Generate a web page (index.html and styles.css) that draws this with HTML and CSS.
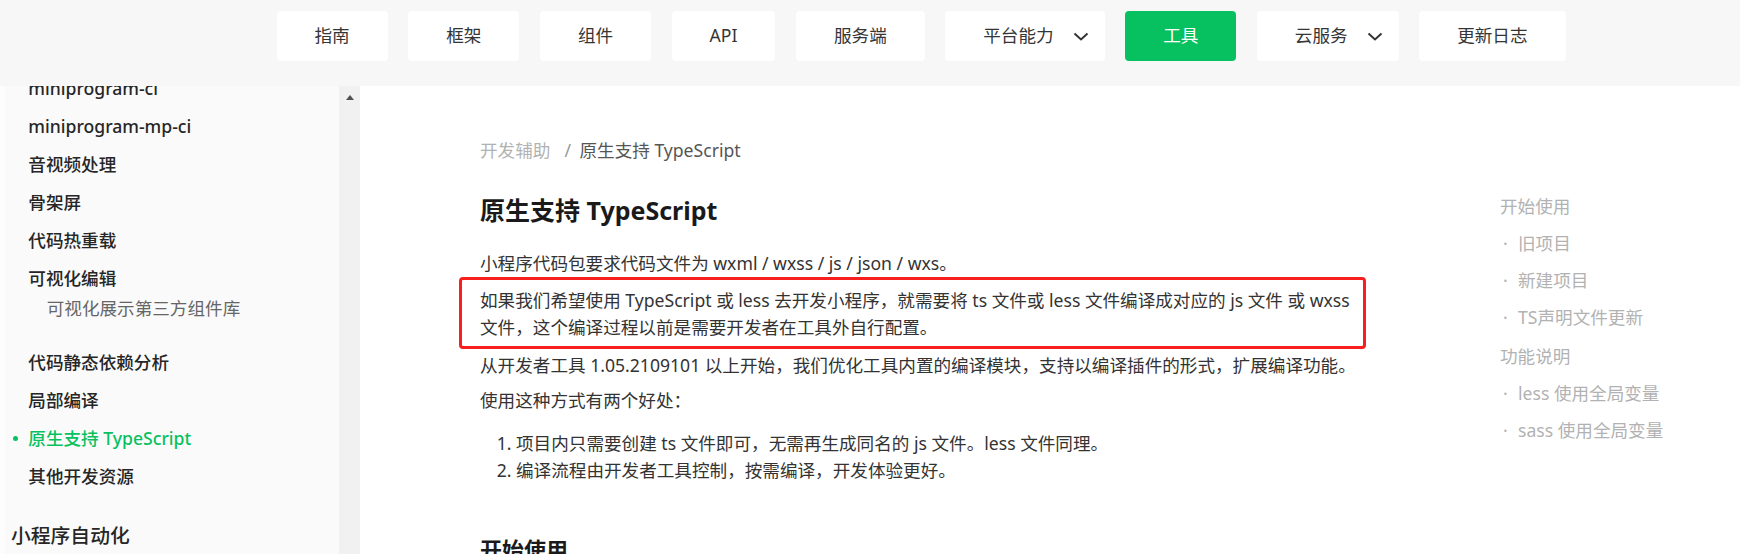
FILE: index.html
```html
<!DOCTYPE html>
<html lang="zh-CN">
<head>
<meta charset="utf-8">
<title>原生支持 TypeScript</title>
<link rel="stylesheet" href="styles.css">
</head>
<body>
<header class="topbar">
  <nav class="nav">
    <a class="nav-btn">指南</a>
    <a class="nav-btn">框架</a>
    <a class="nav-btn">组件</a>
    <a class="nav-btn">API</a>
    <a class="nav-btn">服务端</a>
    <a class="nav-btn has-menu">平台能力<svg class="chev" viewBox="0 0 24 24"><path d="M5.5 9.5 L12 15.5 L18.5 9.5"/></svg></a>
    <a class="nav-btn active">工具</a>
    <a class="nav-btn has-menu">云服务<svg class="chev" viewBox="0 0 24 24"><path d="M5.5 9.5 L12 15.5 L18.5 9.5"/></svg></a>
    <a class="nav-btn">更新日志</a>
  </nav>
</header>
<div class="page">
  <aside class="sidebar">
    <ul class="side-list">
      <li><a class="side-link">miniprogram-ci</a></li>
      <li><a class="side-link">miniprogram-mp-ci</a></li>
      <li><a class="side-link">音视频处理</a></li>
      <li><a class="side-link">骨架屏</a></li>
      <li><a class="side-link">代码热重载</a></li>
      <li>
        <a class="side-link">可视化编辑</a>
        <ul class="side-sub">
          <li><a class="sub-link">可视化展示第三方组件库</a></li>
        </ul>
      </li>
      <li><a class="side-link">代码静态依赖分析</a></li>
      <li><a class="side-link">局部编译</a></li>
      <li><a class="side-link is-active">原生支持 TypeScript</a></li>
      <li><a class="side-link">其他开发资源</a></li>
    </ul>
    <div class="side-group">小程序自动化</div>
  </aside>
  <div class="scrollbar"><span class="scroll-up"></span></div>
  <main class="main">
    <article class="doc">
      <div class="crumb"><span class="crumb-parent">开发辅助</span><span class="crumb-sep">/</span><span>原生支持 TypeScript</span></div>
      <h1 class="doc-title">原生支持 TypeScript</h1>
      <p class="para para-first">小程序代码包要求代码文件为 wxml / wxss / js / json / wxs。</p>
      <div class="highlight">
        <p class="para">如果我们希望使用 TypeScript 或 less 去开发小程序，就需要将 ts 文件或 less 文件编译成对应的 js 文件 或 wxss<br>文件，这个编译过程以前是需要开发者在工具外自行配置。</p>
      </div>
      <p class="para para-after-box">从开发者工具 1.05.2109101 以上开始，我们优化工具内置的编译模块，支持以编译插件的形式，扩展编译功能。</p>
      <p class="para para-gap">使用这种方式有两个好处：</p>
      <ol class="doc-list">
        <li>项目内只需要创建 ts 文件即可，无需再生成同名的 js 文件。less 文件同理。</li>
        <li>编译流程由开发者工具控制，按需编译，开发体验更好。</li>
      </ol>
      <h2 class="doc-h2">开始使用</h2>
    </article>
    <nav class="toc">
      <a class="toc-title">开始使用</a>
      <a class="toc-link">旧项目</a>
      <a class="toc-link">新建项目</a>
      <a class="toc-link">TS声明文件更新</a>
      <a class="toc-title toc-title-next">功能说明</a>
      <a class="toc-link">less 使用全局变量</a>
      <a class="toc-link">sass 使用全局变量</a>
    </nav>
  </main>
</div>
</body>
</html>
```

FILE: styles.css
```css
* {
  box-sizing: border-box;
}

html,
body {
  margin: 0;
  padding: 0;
}

body {
  width: 1740px;
  height: 554px;
  overflow: hidden;
  font-family: "Noto Sans", "Noto Sans CJK SC", sans-serif;
  font-size: 17.6px;
  color: #333;
  background: #fff;
}

a {
  text-decoration: none;
  color: inherit;
}

/* ---------- top bar ---------- */
.topbar {
  height: 86px;
  background: #f7f7f7;
  padding: 11px 0 0 276.5px;
}

.nav {
  display: flex;
  gap: 20.5px;
}

.nav-btn {
  display: flex;
  align-items: center;
  height: 50px;
  padding: 0 38px;
  background: #fff;
  border-radius: 4px;
  color: #353535;
  line-height: 1;
  white-space: nowrap;
}

.nav-btn.has-menu {
  padding-right: 12px;
}

.nav-btn.active {
  background: #07c160;
  color: #fff;
}

.chev {
  width: 24px;
  height: 24px;
  margin-left: 15px;
  fill: none;
  stroke: #333;
  stroke-width: 2;
}

/* ---------- page ---------- */
.page {
  display: flex;
  height: 468px;
}

.sidebar {
  flex: none;
  width: 339px;
  background: #fafafa;
  border-left: 5px solid #fdfdfd;
  overflow: hidden;
}

.side-list {
  list-style: none;
  margin: -16.7px 0 0;
  padding: 0;
}

.side-link {
  display: flex;
  align-items: center;
  padding: 6px 0 6px 23.3px;
  line-height: 26px;
  font-weight: 500;
  color: #262626;
  white-space: nowrap;
}

.side-link.is-active {
  color: #07c160;
}

.side-link.is-active::before {
  content: "";
  flex: none;
  width: 5px;
  height: 5px;
  border-radius: 50%;
  background: #07c160;
  margin-left: -15.8px;
  margin-right: 10.8px;
}

.side-sub {
  list-style: none;
  margin: 0 0 24px;
  padding: 0;
}

.sub-link {
  display: block;
  padding-left: 41.7px;
  line-height: 22px;
  color: #666;
  white-space: nowrap;
}

.side-group {
  margin-top: 26.7px;
  padding-left: 6px;
  font-size: 19.8px;
  line-height: 28px;
  font-weight: 500;
  color: #262626;
}

.scrollbar {
  flex: none;
  width: 21px;
  background: #f1f1f1;
  display: flex;
  justify-content: center;
  align-items: flex-start;
  padding-top: 9px;
}

.scroll-up {
  width: 0;
  height: 0;
  border-left: 4.5px solid transparent;
  border-right: 4.5px solid transparent;
  border-bottom: 5px solid #505050;
}

/* ---------- main ---------- */
.main {
  flex: 1;
  display: flex;
  align-items: flex-start;
}

.doc {
  flex: none;
  width: 882px;
  margin-left: 120px;
  padding-top: 50.5px;
  display: flex;
  flex-direction: column;
}

.crumb {
  line-height: 27px;
  color: #555;
  white-space: nowrap;
}

.crumb-parent {
  color: #b2b2b2;
}

.crumb-sep {
  color: #999;
  margin: 0 8.5px 0 14px;
}

.doc-title {
  margin: 28px 0 0;
  font-size: 25px;
  line-height: 36px;
  font-weight: 700;
  color: #1a1a1a;
  white-space: nowrap;
}

.para {
  margin: 0;
  line-height: 27px;
  white-space: nowrap;
}

.para-first {
  margin-top: 22px;
}

.highlight {
  margin: 0.5px -4px 0 -21px;
  border: 3px solid #f81f1f;
  border-radius: 4px;
  padding: 7.3px 1px 5px 18px;
}

.para-after-box {
  margin-top: 3.2px;
}

.para-gap {
  margin-top: 8px;
}

.doc-list {
  margin: 15.3px 0 0;
  padding-left: 36px;
  line-height: 27px;
  white-space: nowrap;
}

.doc-h2 {
  margin: 50px 0 0;
  font-size: 22px;
  line-height: 30px;
  font-weight: 700;
  color: #1a1a1a;
}

/* ---------- toc ---------- */
.toc {
  flex: none;
  margin-left: 138px;
  padding-top: 102.2px;
  display: flex;
  flex-direction: column;
  color: #b2b2b2;
}

.toc-title,
.toc-link {
  display: block;
  padding: 5px 0;
  line-height: 27px;
  white-space: nowrap;
}

.toc-title-next {
  margin-top: 2px;
}

.toc-link::before {
  content: "·";
  display: inline-block;
  width: 15px;
  padding-left: 3px;
}
```
